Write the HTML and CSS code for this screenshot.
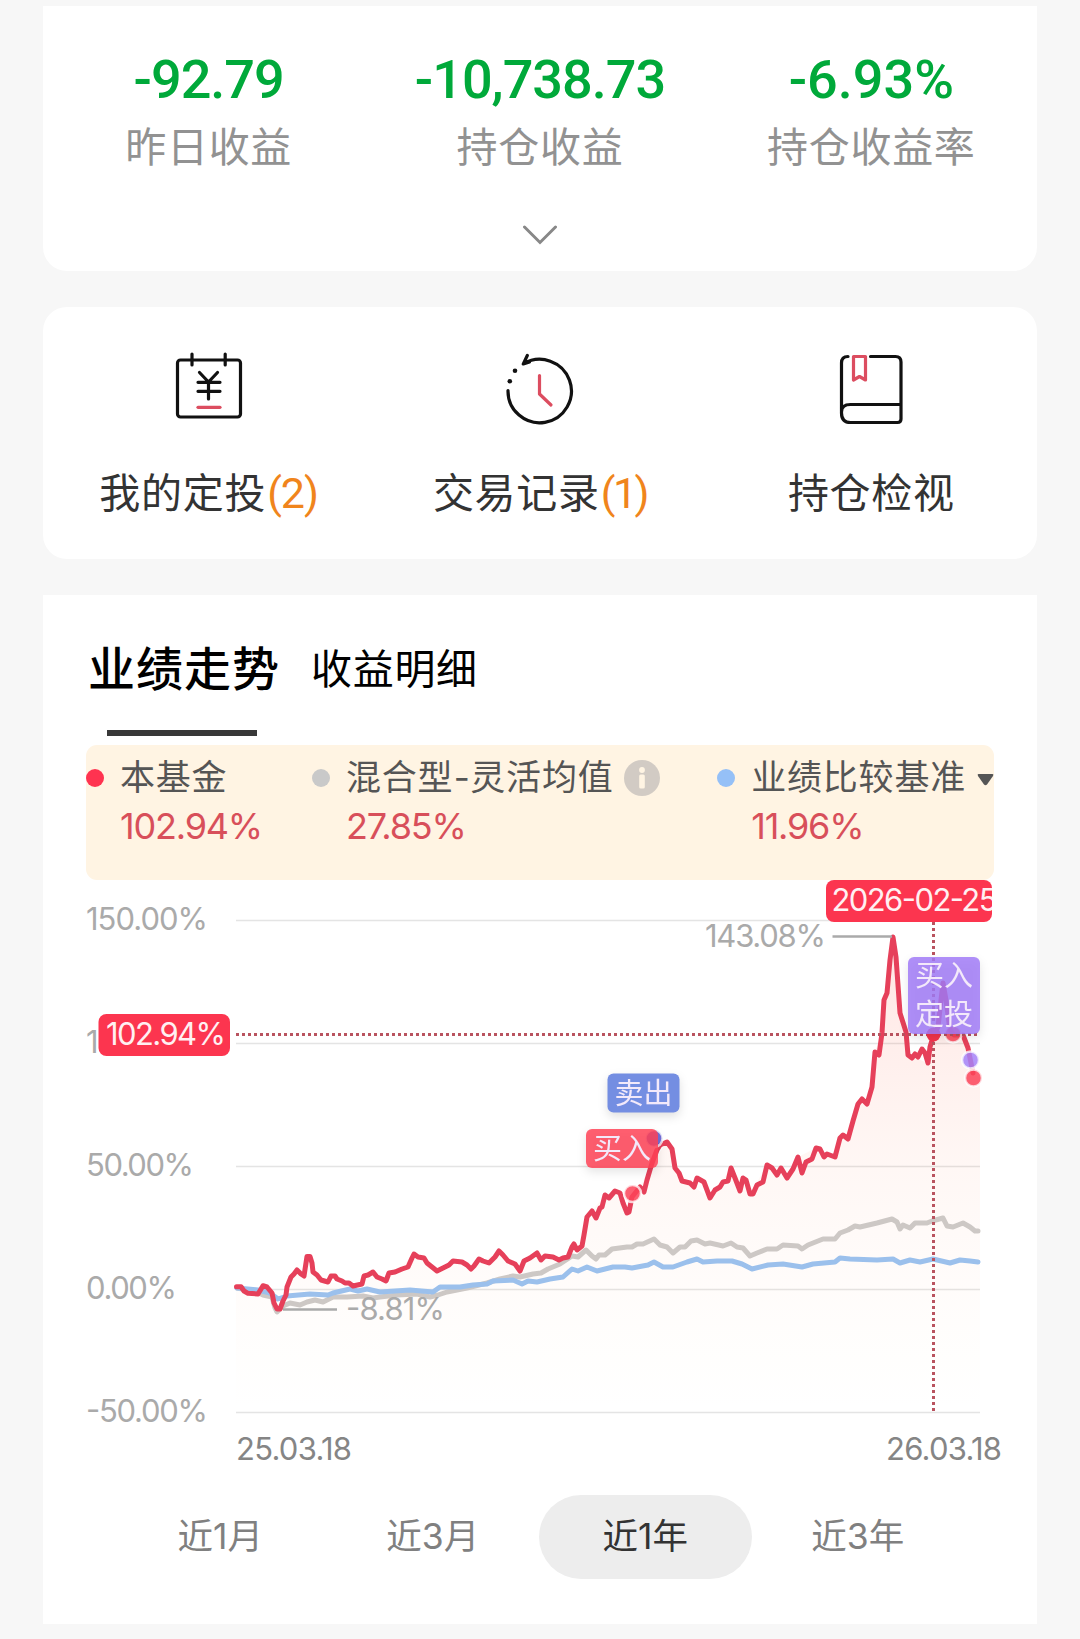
FILE: index.html
```html
<!doctype html>
<html lang="zh-CN">
<head>
  <meta charset="utf-8">
  <title>基金持仓</title>
  <link rel="stylesheet" href="styles.css">
</head>
<body>

<div class="card summary">
  <div class="row">
    <div class="stat"><div class="num">-92.79</div><div class="name">昨日收益</div></div>
    <div class="stat"><div class="num">-10,738.73</div><div class="name">持仓收益</div></div>
    <div class="stat"><div class="num rate-num">-6.93%</div><div class="name">持仓收益率</div></div>
  </div>
  <svg class="more" width="36" height="22" viewBox="0 0 36 22"><path d="M2.500 2L18 17.500L33.500 2"/></svg>
</div>

<div class="card menu">
  <a class="item">
    <svg class="icon" width="80" height="80" viewBox="169.500 347 80 80">
      <rect x="178" y="360" width="63" height="57" rx="3"/>
      <path d="M192.500 354V365M225.700 354V365M200 372.500L209 382L218 372.500M209 382V399M198.500 382.300H220.500M198.500 391.300H220.500"/>
      <path class="red" d="M198.500 407.300H220.500"/>
    </svg>
    <div class="text">我的定投<span class="count">(2)</span></div>
  </a>
  <a class="item">
    <svg class="icon" width="80" height="80" viewBox="500.500 347 80 80">
      <path d="M508.500 390.500A31.700 31.700 0 1 0 524 363.800M527.800 355.500L523.800 364L530 362"/>
      <circle class="dot" cx="515.500" cy="370.700" r="2.300"/>
      <circle class="dot" cx="510.300" cy="381.200" r="2.300"/>
      <path class="red" d="M540 375.500V394L551.500 405"/>
    </svg>
    <div class="text">交易记录<span class="count one">(1)</span></div>
  </a>
  <a class="item">
    <svg class="icon" width="80" height="80" viewBox="831.500 347 80 80">
      <path d="M848.500 356.500Q842 356.500 842 363V413Q842 422.500 851 422.500H898Q901.500 422.500 901.500 419V362Q901.500 356.500 896 356.500H871M842 412Q842 404.500 851 404.500H901"/>
      <path class="red" d="M854 356.500H866V380L860 376.500L854 380Z"/>
    </svg>
    <div class="text">持仓检视</div>
  </a>
</div>

<div class="card trend">
  <div class="tabs">
    <div class="tab on">业绩走势</div>
    <div class="tab">收益明细</div>
  </div>

  <div class="legend">
    <div class="series s1">
      <i class="bullet red"></i>
      <div><div class="label">本基金</div><div class="rate">102.94%</div></div>
    </div>
    <div class="series s2">
      <i class="bullet gray"></i>
      <div><div class="label">混合型<span class="dash">-</span>灵活均值
        <svg class="info" width="36" height="36" viewBox="0 0 36 36"><circle class="disc" cx="18" cy="18" r="18"/><circle class="mark" cx="18" cy="10" r="2.900"/><rect class="mark" x="15.200" y="14.500" width="5.600" height="14" rx="1.500"/></svg>
      </div><div class="rate">27.85%</div></div>
    </div>
    <div class="series s3">
      <i class="bullet blue"></i>
      <div><div class="label">业绩比较基准<svg class="caret" width="17" height="12" viewBox="0 0 17 12"><path d="M1.500 0H15.500Q17 0 16 2L10 10.500Q8.500 12 7 10.500L1 2Q0 0 1.500 0Z"/></svg></div><div class="rate">11.96%</div></div>
    </div>
  </div>

  <svg class="chart" width="950" height="600" viewBox="86 880 950 600">
    <defs>
      <linearGradient id="fade" x1="0" y1="937" x2="0" y2="1412" gradientUnits="userSpaceOnUse">
        <stop offset="0" stop-color="#ff4a3c" stop-opacity=".14"/>
        <stop offset=".5" stop-color="#ff6a3c" stop-opacity=".05"/>
        <stop offset="1" stop-color="#ffb060" stop-opacity="0"/>
      </linearGradient>
      <clipPath id="tipClip"><rect x="826" y="880" width="166" height="42" rx="8"/></clipPath>
    </defs>

    <!-- grid -->
    <path class="grid" d="M236 920.500H980M236 1043.500H980M236 1166.500H980M236 1289.500H980M236 1412.500H980"/>
    <g class="axis">
      <text x="86" y="930" textLength="122">150.00%</text>
      <text x="86" y="1053" textLength="122">100.00%</text>
      <text x="86" y="1176" textLength="108">50.00%</text>
      <text x="86" y="1299" textLength="91">0.00%</text>
      <text x="86" y="1422" textLength="122">-50.00%</text>
    </g>

    <!-- series -->
    <path class="area" fill="url(#fade)" d="M236 1287L258 1294L263 1286L272 1293L277 1309L280 1309L287 1287L297 1270L304 1276L307 1257L310 1257L313 1272L328 1282L353 1286L373 1272L386 1281L414 1254L437 1271L453 1261L471 1269L499 1251L520 1271L537 1253L568 1257L574 1244L582 1246L587 1217L605 1195L620 1193L627 1213L640 1187L652 1163L667 1142L675 1168L694 1187L710 1198L731 1168L750 1194L767 1165L787 1178L798 1157L816 1148L835 1157L843 1135L848 1139L860 1102L867 1104L875 1052L882 1033L893 937L900 1013L908 1055L928 1063L933 1037L943 983L954 1035L963 1035L973 1073L980 1078V1412H236Z"/>
    <polyline class="line gray" points="237,1288 257,1292 263,1295 272,1297 275,1308 277,1312 283,1306 290,1303 300,1305 307,1302 315,1300 323,1302 333,1297 347,1297 363,1296 373,1298 380,1297 397,1295 417,1294 430,1297 438,1295 447,1292 467,1288 487,1283 500,1279 513,1276 520,1277 533,1274 541,1273 548,1269 560,1264 572,1256 578,1257 586,1250 592,1256 596,1259 599,1255 605,1255 612,1249 627,1247 632,1247 637,1244 643,1244 654,1239 660,1245 667,1247 673,1253 680,1247 685,1247 691,1241 697,1240 705,1244 710,1243 723,1246 731,1243 737,1247 743,1248 750,1256 757,1253 767,1249 777,1249 783,1245 798,1246 802,1249 808,1245 823,1239 835,1239 840,1233 848,1230 855,1226 860,1227 877,1223 892,1219 897,1222 900,1229 903,1225 910,1228 915,1223 927,1223 932,1221 943,1218 947,1226 953,1227 963,1223 970,1227 975,1231 978,1231"/>
    <polyline class="line blue" points="237,1288 258,1290 270,1293 278,1299 287,1296 310,1294 328,1295 333,1293 350,1289 358,1291 367,1289 380,1292 410,1290 433,1292 440,1287 460,1287 473,1285 487,1284 493,1281 513,1280 522,1284 528,1281 537,1282 550,1279 563,1277 572,1269 578,1271 587,1267 597,1271 605,1269 613,1267 625,1267 632,1268 648,1265 654,1262 663,1267 673,1267 687,1262 697,1259 703,1262 717,1261 732,1261 742,1264 752,1269 768,1265 783,1264 802,1267 813,1264 835,1262 840,1258 850,1259 877,1260 893,1259 900,1263 910,1260 920,1262 933,1259 950,1263 960,1260 970,1261 978,1262"/>
    <polyline class="line red" points="236.500,1286.700 241,1286.700 244,1291 248,1293.300 258,1294 263,1285.700 267,1287 272,1293 274,1303 277,1309 280,1309 283,1301 286,1295 287,1287 291,1277 294,1274 297,1270 301,1274 304,1276 306,1263 307,1256.500 310,1256.500 312,1263 313,1272 317,1275 321,1280 328,1282 331,1276 335,1276 337,1279 342,1281 345,1283 349,1283 353,1286 362,1284 364,1276 368,1275 373,1272 377,1277 382,1279 386,1281 389,1273 395,1272 402,1269 408,1267 412,1258 414,1254 418,1257 424,1258 427,1263 432,1267 437,1271 443,1268 449,1265 453,1261 462,1262 467,1265 471,1269 474,1266 479,1259 483,1261 489,1263 495,1257 499,1251 503,1255 508,1261 515,1264 520,1271 524,1261 530,1258 537,1253 541,1260 545,1256 553,1257 559,1260 563,1258 568,1257 572,1247 574,1244 577,1250 582,1246 584,1235 587,1217 592,1211 596,1218 600,1208 602,1207 605,1195 609,1198 615,1191 620,1193 623,1203 627,1213 629,1212 632,1197 640,1187 644,1192 647,1180 652,1163 657,1150 660,1145 667,1142 672,1149 675,1168 679,1173 682,1181 690,1183 694,1187 697,1178 704,1182 707,1190 710,1198 715,1190 720,1187 723,1182 728,1181 731,1168 735,1178 740,1191 743,1178 746,1180 750,1194 753,1194 757,1185 763,1182 767,1165 772,1168 777,1175 781,1168 787,1178 793,1169 798,1157 802,1173 806,1162 812,1159 816,1148 820,1149 824,1157 827,1154 835,1157 840,1138 843,1135 848,1139 853,1121 858,1104 862,1099 867,1104 872,1087 875,1052 879,1055 882,1033 884,1000 887,993 890,960 893,937 896,957 900,1013 906,1032 908,1055 912,1058 915,1054 918,1057 922,1049 925,1053 928,1063 930,1047 933,1037 938,1027 941,1000 943,983 946,1000 950,1030 954,1035 963,1035 968,1048 973,1073"/>

    <!-- high / low -->
    <path class="lead" d="M832.500 936.500H892M283 1309.500H337"/>
    <g class="axis">
      <text x="705" y="947" textLength="121">143.08%</text>
      <text x="346" y="1320" textLength="99">-8.81%</text>
    </g>

    <!-- trade points -->
    <circle class="point buy" cx="632.500" cy="1193.500" r="8.500"/>
    <circle class="point sell" cx="654" cy="1138.500" r="8.500"/>
    <circle class="point buy" cx="953" cy="1034" r="8.500"/>
    <circle class="point plan" cx="970.500" cy="1060" r="8.500"/>
    <circle class="point buy" cx="973.500" cy="1078" r="8.500"/>

    <!-- crosshair -->
    <path class="cross" d="M236 1034.500H979M933.500 922V1412"/>
    <circle class="focus" cx="933.500" cy="1034.500" r="7"/>

    <g class="tag">
      <rect x="607.500" y="1073.500" width="72" height="39" rx="6" fill="#748ee2"/>
      <text x="643.500" y="1103.500">卖出</text>
    </g>
    <g class="tag">
      <rect x="586" y="1129" width="72" height="39" rx="6" fill="#ff4055" fill-opacity=".84"/>
      <text x="622" y="1158.500">买入</text>
    </g>
    <g class="tag">
      <rect x="908" y="957" width="72" height="77" rx="6" fill="#a07af7" fill-opacity=".84"/>
      <text x="944" y="986">买入</text>
      <text x="944" y="1025">定投</text>
    </g>

    <rect class="tip" x="98.500" y="1014" width="131.500" height="42" rx="8"/>
    <text class="tiptext" x="106" y="1045" textLength="120">102.94%</text>
    <rect class="tip" x="826" y="880" width="166" height="42" rx="8"/>
    <g clip-path="url(#tipClip)"><text class="tiptext" x="831.500" y="911" textLength="166">2026-02-25</text></g>

    <g class="date">
      <text x="236" y="1460" textLength="116">25.03.18</text>
      <text x="886" y="1460" textLength="116">26.03.18</text>
    </g>
  </svg>

  <div class="periods">
    <div class="period">近1月</div>
    <div class="period">近3月</div>
    <div class="period on">近1年</div>
    <div class="period">近3年</div>
  </div>
</div>

</body>
</html>
```
FILE: styles.css
```css
* {
  box-sizing: border-box;
}
body {
  margin: 0;
  padding: 6px 43px 0;
  background: #f7f7f7;
  font-family: Inter, "Noto Sans CJK SC", sans-serif;
  color: #333;
}
svg {
  display: block;
}
.card {
  background: #fff;
  border-radius: 24px;
}

/* top numbers */
.summary {
  height: 265px;
  border-radius: 0 0 24px 24px;
}
.row {
  display: flex;
  padding-top: 44px;
}
.stat {
  flex: 1;
  text-align: center;
}
.num {
  font: 500 54px/60px Roboto, sans-serif;
  letter-spacing: -1px;
  color: #00a93a;
  white-space: nowrap;
}
.rate-num {
  letter-spacing: 0;
}
.name {
  margin-top: 7px;
  font-size: 41px;
  line-height: 60px;
  letter-spacing: .7px;
  color: #929292;
  white-space: nowrap;
}
.more {
  margin: 48px auto 0;
  fill: none;
  stroke: #888;
  stroke-width: 3;
  stroke-linecap: round;
}

/* shortcuts */
.menu {
  display: flex;
  height: 252px;
  margin-top: 36px;
  padding-top: 40px;
}
.item {
  flex: 1;
  text-align: center;
}
.icon {
  margin: 0 auto;
  fill: none;
  stroke: #111;
  stroke-width: 3.2;
  stroke-linecap: round;
  stroke-linejoin: round;
}
.icon .red {
  stroke: #dc4d60;
}
.icon .dot {
  fill: #111;
  stroke: none;
}
.text {
  margin-top: 36px;
  font-size: 41px;
  line-height: 60px;
  letter-spacing: .7px;
  white-space: nowrap;
}
.count {
  font-family: Roboto, sans-serif;
  font-size: 43px;
  letter-spacing: -1px;
  margin-left: 1px;
  color: #f0851c;
}
.count.one {
  letter-spacing: -2.5px;
}

/* trend */
.trend {
  height: 1029px;
  margin-top: 36px;
  padding: 0 43px;
  border-radius: 0;
}
.tabs {
  display: flex;
  gap: 31px;
  height: 141px;
  padding-left: 2px;
  color: #000;
}
.tab {
  padding-top: 44px;
  font-size: 41px;
  line-height: 60px;
  letter-spacing: .7px;
}
.tab.on {
  display: flex;
  flex-direction: column;
  justify-content: space-between;
  align-items: center;
  font-size: 47px;
  font-weight: 500;
  letter-spacing: 1px;
}
.tab.on::after {
  content: "";
  width: 150px;
  height: 6px;
  margin-right: 5px;
  background: #383838;
}
.legend {
  display: flex;
  height: 135px;
  margin-top: 9px;
  padding-top: 9px;
  border-radius: 11px;
  background: #fff4e3;
}
.series {
  display: flex;
  gap: 16px;
}
.s1 {
  width: 226px;
}
.s2 {
  width: 405.5px;
}
.bullet {
  flex: none;
  width: 18px;
  height: 18px;
  margin-top: 15px;
  border-radius: 50%;
}
.bullet.red {
  background: #ff3350;
}
.bullet.gray {
  background: #c9c9c9;
}
.bullet.blue {
  background: #95c0f7;
}
.label {
  display: flex;
  align-items: center;
  height: 48px;
  font-size: 35px;
  line-height: 44px;
  letter-spacing: .8px;
  color: #555;
  white-space: nowrap;
  padding-bottom: 3px;
}
.dash {
  width: 17px;
  text-align: center;
  letter-spacing: 0;
}
.info {
  margin: 3px 0 0 10px;
}
.info .disc {
  fill: #d2cbc4;
}
.info .mark {
  fill: #fff4e3;
}
.caret {
  margin: 7px 0 0 11px;
  fill: #555;
}
.rate {
  font-size: 36px;
  line-height: 48px;
  letter-spacing: -1.2px;
  color: #d84f5a;
}

.chart {
  overflow: visible;
}
.grid {
  stroke: #e4e4e4;
  stroke-width: 1.3;
}
.axis {
  font-size: 31px;
  fill: #aaa;
}
.date {
  font-size: 31px;
  fill: #858585;
}
.line {
  fill: none;
  stroke-width: 5;
  stroke-linejoin: round;
  stroke-linecap: round;
}
.line.gray {
  stroke: #cdc8c5;
}
.line.blue {
  stroke: #9bc0ec;
}
.line.red {
  stroke: #e6405a;
}
.lead {
  stroke: #aaa;
  stroke-width: 2.6;
}
.cross {
  fill: none;
  stroke: #b9535f;
  stroke-width: 3;
  stroke-dasharray: 3 3;
}
.point {
  stroke: #fff;
  stroke-opacity: .75;
  stroke-width: 2.5;
  fill-opacity: .85;
}
.buy {
  fill: #fb4358;
}
.sell {
  fill: #5a55d0;
}
.plan {
  fill: #a583f8;
}
.focus {
  fill: #f5344d;
}
.tag {
  filter: drop-shadow(0 4px 5px rgba(0, 0, 0, .12));
}
.tag text {
  font-size: 29px;
  text-anchor: middle;
  fill: #f3e9fa;
}
.tip {
  fill: #fc354f;
}
.tiptext {
  font-size: 31px;
  fill: #fff0f2;
}

.periods {
  display: flex;
  margin: 15px 0 0 28px;
}
.period {
  width: 212.5px;
  height: 84px;
  border-radius: 42px;
  font-size: 35.5px;
  line-height: 83px;
  text-align: center;
  color: #808080;
}
.period.on {
  background: #ededed;
  color: #333;
}
```
